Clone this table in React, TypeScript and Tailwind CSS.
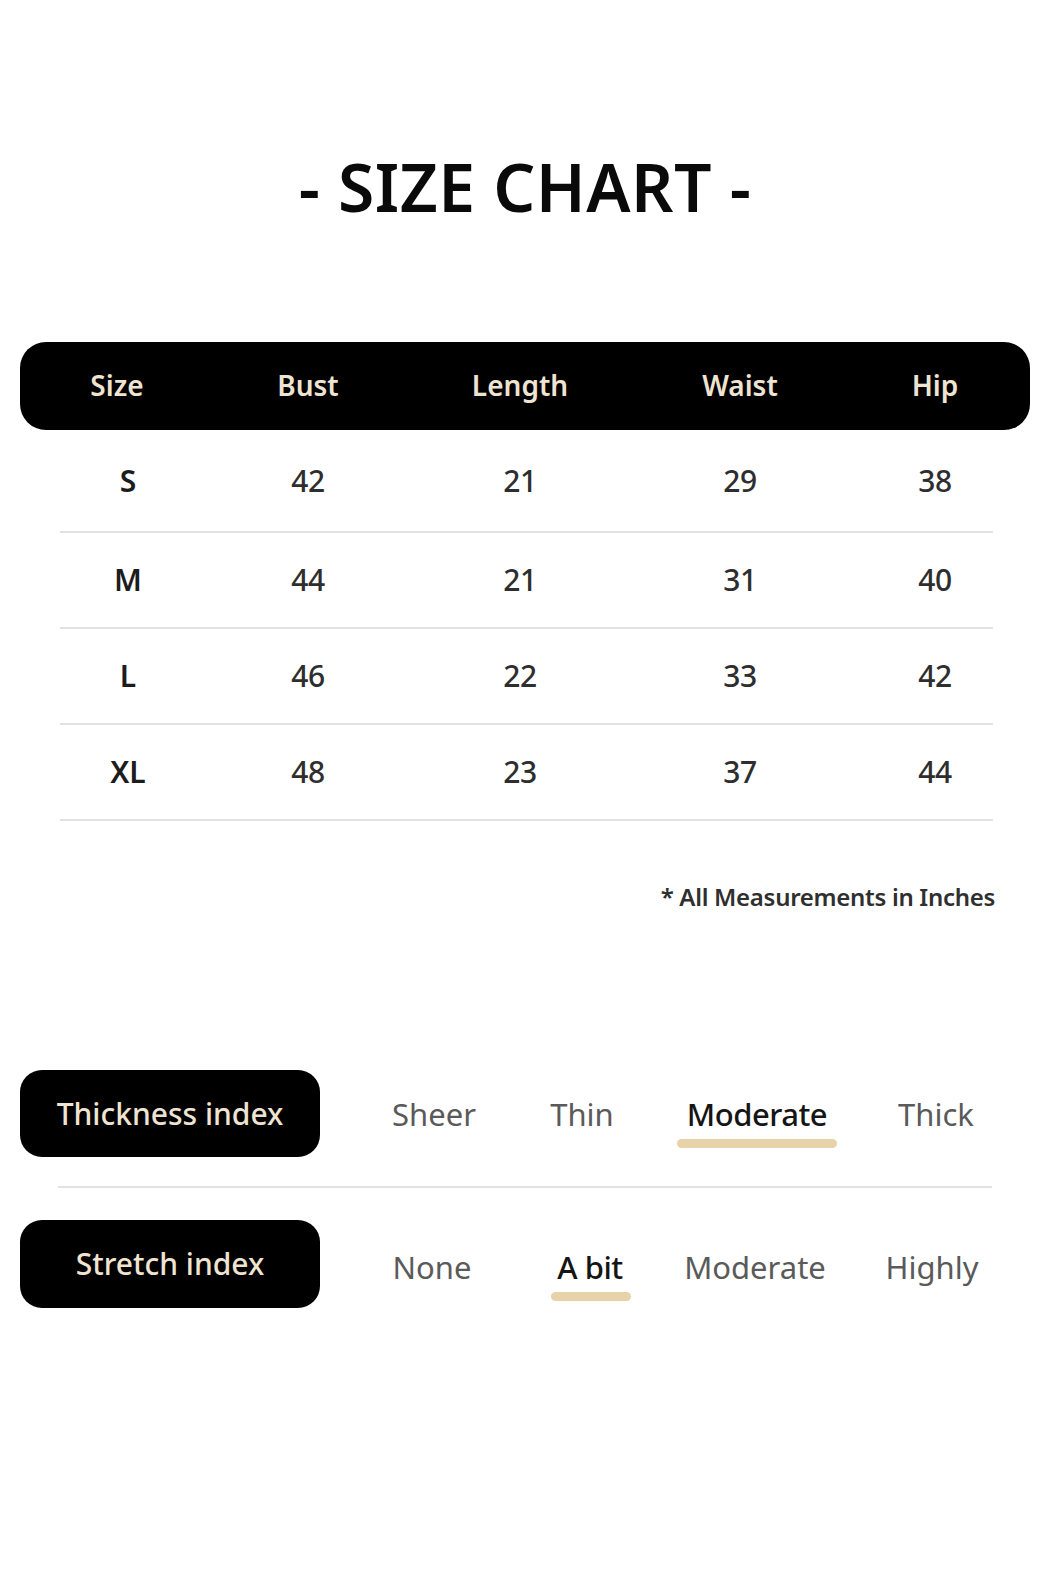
import React from "react";

const headers = ["Size", "Bust", "Length", "Waist", "Hip"];
const rows = [
  ["S", "42", "21", "29", "38"],
  ["M", "44", "21", "31", "40"],
  ["L", "46", "22", "33", "42"],
  ["XL", "48", "23", "37", "44"],
];

const cols = "grid grid-cols-[194px_188px_236px_204px_186px]";

function Option({ label, selected, ext }: { label: string; selected?: boolean; ext?: string }) {
  return (
    <div className="flex justify-center">
      <span
        className={
          "relative text-[31px] leading-[40px] " +
          (selected ? "text-[#151515] font-medium tracking-[-0.5px]" : "text-[#5a5a5a]")
        }
      >
        {label}
        {selected && (
          <span
            className={
              "absolute top-[45px] h-[9px] rounded-full bg-[#e7d2a9] " + (ext ?? "left-[-10px] right-[-10px]")
            }
          />
        )}
      </span>
    </div>
  );
}

export default function App() {
  return (
    <div className="w-[1050px] h-[1575px] bg-white font-['Noto_Sans',sans-serif] overflow-hidden">
      <div className="pt-[150px] flex justify-center">
        <h1 className="text-[66px] leading-[72px] font-semibold text-[#0a0a0a] tracking-[0.5px]">- SIZE CHART -</h1>
      </div>

      <div className="mt-[120px] mx-[20px]">
        <div className={cols + " h-[88px] items-center bg-black rounded-[26px]"}>
          {headers.map((h) => (
            <div key={h} className="text-center text-[28px] font-semibold text-[#efe4d1] leading-[36px] pb-[2px]">
              {h}
            </div>
          ))}
        </div>
        {rows.map((r, i) => (
          <div key={r[0]}>
            <div className={cols + " items-center " + (i === 0 ? "h-[101px]" : "h-[94px]")}>
              {r.map((v, j) => (
                <div
                  key={j}
                  className={
                    "text-center text-[30px] leading-[36px] " +
                    (j === 0 ? "pl-[22px] font-semibold text-[#1c1c1c]" : "font-medium text-[#2e2e2e] tracking-[-0.5px]")
                  }
                >
                  {v}
                </div>
              ))}
            </div>
            <div className="ml-[40px] mr-[37px] h-[2px] bg-[#e2e2e2]" />
          </div>
        ))}
      </div>

      <div className="mt-[60px] pr-[55px] flex justify-end">
        <span className="text-[24px] leading-[32px] font-semibold text-[#2f2f2f] tracking-[-0.3px]">* All Measurements in Inches</span>
      </div>

      <div className="mt-[157px] flex items-center">
        <div className="ml-[20px] w-[300px] h-[87px] rounded-[22px] bg-black flex items-center justify-center">
          <span className="text-[30px] font-medium text-[#efe4d1] leading-[40px]">Thickness index</span>
        </div>
        <div className="ml-[38px] grid grid-cols-[152px_144px_206px_152px] items-center">
          <Option label="Sheer" />
          <Option label="Thin" />
          <Option label="Moderate" selected />
          <Option label="Thick" />
        </div>
      </div>

      <div className="mt-[29px] ml-[58px] mr-[58px] h-[2px] bg-[#e2e2e2]" />

      <div className="mt-[32px] flex items-center">
        <div className="ml-[20px] w-[300px] h-[88px] rounded-[22px] bg-black flex items-center justify-center">
          <span className="text-[30px] font-medium text-[#efe4d1] leading-[40px]">Stretch index</span>
        </div>
        <div className="ml-[38px] mt-[6px] grid grid-cols-[148px_168px_162px_192px] items-center">
          <Option label="None" />
          <Option label="A bit" selected ext="left-[-6px] right-[-8px]" />
          <Option label="Moderate" />
          <Option label="Highly" />
        </div>
      </div>
    </div>
  );
}
